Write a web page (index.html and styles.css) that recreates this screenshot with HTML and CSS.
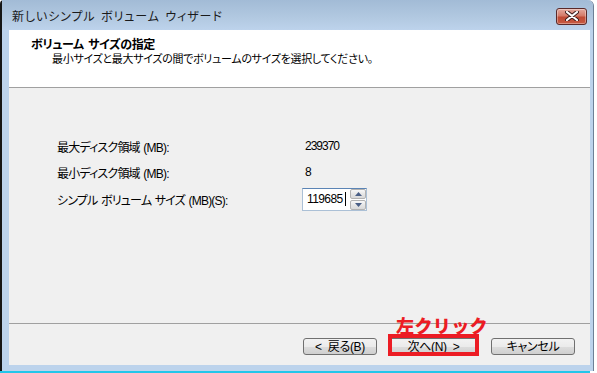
FILE: index.html
```html
<!DOCTYPE html>
<html lang="ja">
<head>
<meta charset="utf-8">
<title>新しいシンプル ボリューム ウィザード</title>
<link rel="stylesheet" href="styles.css">
</head>
<body>
<div class="screen">
  <div class="window">
    <div class="titlebar">
      <span class="title">新しいシンプル ボリューム ウィザード</span>
      <div class="close">
        <svg width="14" height="10" viewBox="0 0 14 10"><path d="M2 1 L12 9 M12 1 L2 9" stroke="#3a1c1c" stroke-width="4" stroke-linecap="round"/><path d="M2 1 L12 9 M12 1 L2 9" stroke="#ffffff" stroke-width="2.2" stroke-linecap="round"/></svg>
      </div>
    </div>
    <div class="client">
      <div class="header">
        <div class="h-title">ボリューム サイズの指定</div>
        <div class="h-sub">最小サイズと最大サイズの間でボリュームのサイズを選択してください。</div>
      </div>
      <div class="body">
        <div class="form">
          <span class="label">最大ディスク領域 (MB):</span><span class="value">239370</span>
          <span class="label">最小ディスク領域 (MB):</span><span class="value">8</span>
          <span class="label">シンプル ボリューム サイズ (MB)(S):</span>
          <div class="spin">
            <div class="input">119685<span class="caret"></span></div>
            <div class="arrows">
              <span class="arr up"><svg width="7" height="4" viewBox="0 0 7 4"><path d="M0 4 L3.5 0 L7 4 Z" fill="#4a5f86"/></svg></span>
              <span class="arr down"><svg width="7" height="4" viewBox="0 0 7 4"><path d="M0 0 L7 0 L3.5 4 Z" fill="#4a5f86"/></svg></span>
            </div>
          </div>
        </div>
      </div>
      <div class="footer">
        <button class="btn back">&lt; 戻る(B)</button>
        <div class="next-wrap">
          <button class="btn next">次へ(N) &gt;</button>
          <div class="hl"></div>
          <div class="hl-label">左クリック</div>
        </div>
        <button class="btn cancel">キャンセル</button>
      </div>
    </div>
  </div>
  <div class="bottom-line"></div>
</div>
</body>
</html>
```

FILE: styles.css
```css
* { box-sizing: border-box; }
html, body { margin: 0; padding: 0; }
body {
  background: #ffffff;
  font-family: "Liberation Sans", "Noto Sans CJK JP", sans-serif;
  font-size: 12px;
  color: #000;
  width: 597px;
  height: 373px;
  overflow: hidden;
  font-feature-settings: "palt";
}
.screen {
  display: flex;
  flex-direction: column;
  width: 597px;
  height: 373px;
}
.window {
  width: 594px;
  height: 371px;
  background: #bcd3ec;
  border-left: 2px solid #161616;
  border-right: 1px solid #6d8096;
  border-top-left-radius: 4px;
  border-top-right-radius: 6px;
  display: flex;
  flex-direction: column;
}
.titlebar {
  height: 30px;
  flex: none;
  display: flex;
  align-items: center;
  justify-content: space-between;
  padding: 0 6px 0 10px;
  background: linear-gradient(#a2bbd6, #b2c9e1 60%, #bdd3ec);
  border-top-right-radius: 6px;
}
.title {
  font-family: "Noto Sans CJK JP", sans-serif;
  font-size: 12px;
  color: #1a1a1a;
  letter-spacing: 0.9px;
  word-spacing: 2px;
  padding-top: 1px;
}
.close {
  width: 31px;
  height: 17px;
  margin-top: 2px;
  border: 1px solid #5a2a2a;
  border-radius: 3px;
  background: linear-gradient(#e3a99e, #d47a68 45%, #bf4a34 55%, #c75a42);
  display: flex;
  align-items: center;
  justify-content: center;
  box-shadow: inset 0 0 0 1px rgba(255,255,255,0.35);
}
.client {
  flex: 1;
  margin: 0 3px 6px 7px;
  background: #f0f0f0;
  display: flex;
  flex-direction: column;
}
.header {
  height: 58px;
  flex: none;
  background: #ffffff;
  border-bottom: 1px solid #a0a0a0;
  padding: 7px 0 0 22px;
}
.h-title {
  font-family: "Noto Sans CJK JP", sans-serif;
  font-weight: bold;
  font-size: 12px;
  letter-spacing: -0.4px;
  word-spacing: 2px;
  line-height: 14px;
}
.h-sub {
  font-family: "Noto Sans CJK JP", sans-serif;
  font-size: 11px;
  letter-spacing: -0.3px;
  line-height: 15px;
  margin-left: 21px;
}
.body {
  height: 236px;
  flex: none;
  border-bottom: 1px solid #a0a0a0;
}
.form {
  display: grid;
  grid-template-columns: 245px auto;
  grid-template-rows: 26px 26px 28px;
  align-items: center;
  padding: 45px 0 0 48px;
}
.label {
  letter-spacing: -0.8px;
  word-spacing: 1px;
}
.value {
  padding-left: 3px;
  letter-spacing: -1px;
}
.spin {
  display: flex;
  align-items: center;
}
.input {
  width: 65px;
  height: 23px;
  background: #ffffff;
  border: 1px solid #abc0d6;
  border-top-color: #5b84b5;
  display: flex;
  align-items: center;
  padding-left: 4px;
  letter-spacing: -0.6px;
  font-size: 12px;
}
.caret {
  display: inline-block;
  width: 1px;
  height: 14px;
  background: #000;
  margin-left: 2px;
}
.arrows {
  display: flex;
  flex-direction: column;
  margin-left: -17px;
  gap: 1px;
}
.arr {
  width: 16px;
  height: 10px;
  border: 1px solid #b2b2b2;
  border-radius: 2px;
  background: linear-gradient(#f8f8f8, #e6e6e6 50%, #d9d9d9);
  display: flex;
  align-items: center;
  justify-content: center;
}
.footer {
  flex: 1;
  display: flex;
  align-items: flex-start;
  padding: 14px 0 0 294px;
}
.btn {
  height: 17px;
  border: 1px solid #707070;
  border-radius: 3px;
  background: linear-gradient(#f2f2f2, #ebebeb 50%, #dddddd 51%, #cfcfcf);
  font-family: "Liberation Sans", "Noto Sans CJK JP", sans-serif;
  font-feature-settings: "palt";
  font-size: 12px;
  letter-spacing: -0.3px;
  word-spacing: 3px;
  padding: 0;
  color: #000;
  line-height: 14px;
  display: flex;
  align-items: center;
  justify-content: center;
}
.back { width: 74px; }
.next-wrap {
  position: relative;
  margin-left: 12px;
}
.next { width: 89px; }
.cancel {
  width: 84px;
  margin-left: 13px;
}
.hl {
  position: absolute;
  left: -1px;
  right: -1px;
  top: -4px;
  bottom: -1px;
  border: 4px solid #ec1c24;
}
.hl-label {
  position: absolute;
  left: 7px;
  top: -23px;
  font-family: "Noto Sans CJK JP", sans-serif;
  font-feature-settings: normal;
  font-weight: 900;
  font-size: 18px;
  line-height: 20px;
  color: #ec1c24;
  white-space: nowrap;
  letter-spacing: 0.4px;
}
.bottom-line {
  height: 2px;
  width: 590px;
  background: #22c6ea;
}
```
